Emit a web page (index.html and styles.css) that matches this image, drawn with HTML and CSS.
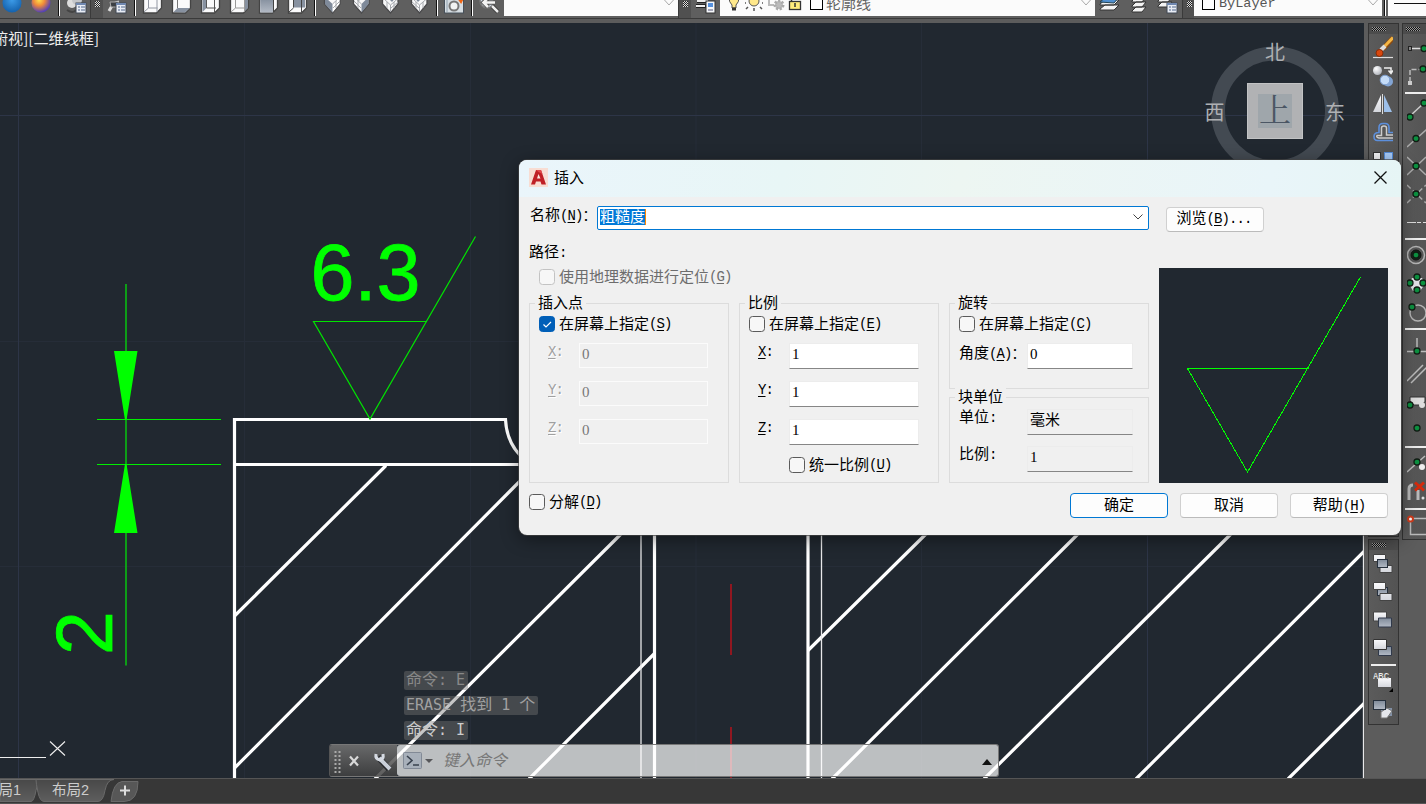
FILE: index.html
```html
<!DOCTYPE html>
<html lang="zh-CN">
<head>
<meta charset="utf-8">
<title>插入</title>
<link rel="stylesheet" href="styles.css">
</head>
<body>
<svg class="defs" width="0" height="0">
  <defs>
    <radialGradient id="blue" cx=".5" cy=".35" r=".6"><stop offset="0" stop-color="#3c9be8"/><stop offset="1" stop-color="#1765b0"/></radialGradient>
    <radialGradient id="fire" cx=".4" cy=".35" r=".65"><stop offset="0" stop-color="#ffe04a"/><stop offset=".45" stop-color="#f08a3a"/><stop offset="1" stop-color="#5140b8"/></radialGradient>
    <radialGradient id="ball" cx=".35" cy=".3" r=".8"><stop offset="0" stop-color="#fff"/><stop offset="1" stop-color="#aaaeb6"/></radialGradient>
    <linearGradient id="pale" x1="0" y1="0" x2="0" y2="1"><stop offset="0" stop-color="#fbfbfd"/><stop offset="1" stop-color="#d4d6dc"/></linearGradient>
    <linearGradient id="steel" x1="0" y1="0" x2="0" y2="1"><stop offset="0" stop-color="#7f8a99"/><stop offset="1" stop-color="#b3bac5"/></linearGradient>
    <linearGradient id="tab" x1="0" y1="0" x2="0" y2="1"><stop offset="0" stop-color="#484848"/><stop offset="1" stop-color="#5e5e5e"/></linearGradient>
    <g id="list"><rect x="14" y="3" width="10" height="10" fill="#e9edf5" stroke="#404855"/><path d="M14 4h10" stroke="#7088b0" stroke-width="2"/><path d="M16 7h2M19 7h4M16 10h2M19 10h4" stroke="#52698c"/></g>
    <g id="dot"><circle r="3" fill="#0c9140" stroke="#111d14" stroke-width="1.300"/></g>
    <g id="box"><path d="M5.500-3h18V8l-5 5h-13z" fill="#fafafb" stroke="#444" stroke-width="1.300"/></g>
    <g id="iso"><path d="M6.500-3v7l8 9L22 4v-7z" fill="#f8f8f9" stroke="#4a4a4c" stroke-width="1.300"/></g>
  </defs>
</svg>

<header class="toolbar">
  <svg class="t first"><circle cx="14" cy="3" r="9.500" fill="url(#blue)"/></svg>
  <svg class="t"><circle cx="14" cy="3" r="9.500" fill="url(#fire)"/></svg>
  <i class="sep"></i>
  <svg class="t t28"><circle cx="10" cy="3" r="5" fill="#ddd"/><circle cx="15" cy="0" r="5" fill="#c4c6c9"/><path d="M5 10q6 4 9 0" stroke="#444" fill="none" stroke-width="2"/><use href="#list"/></svg>
  <i class="grip"></i>
  <svg class="t"><path d="M6 11 10 4l6-2" stroke="#ddd" stroke-width="3" fill="none"/><path d="M7 2h8v5H8z" fill="#3c3f43" stroke="#aaa"/><use href="#list" x="-1"/></svg>
  <i class="sep"></i>
  <svg class="t"><use href="#box"/><path d="M10.500-3V8h9M19 12V-3M10.500 8 6 12" fill="none" stroke="#9297a2"/></svg>
  <svg class="t"><use href="#box"/><path d="M6.500 12l4-4H23l-5 4.500z" fill="#8791a0"/><path d="M10.500-3V8" fill="none" stroke="#777"/></svg>
  <svg class="t"><use href="#box"/><path d="M6.500-3h4V8l-4 4z" fill="#8791a0"/><path d="M10.500-3V8H20M18.500 12V-3" fill="none" stroke="#555"/></svg>
  <svg class="t"><use href="#box"/><path d="M19.500-3H23V8l-3.500 3.500z" fill="#8791a0"/><path d="M10.500-3V8h9M10.500 8 6 12M19.500-3v15" fill="none" stroke="#999"/></svg>
  <svg class="t"><use href="#box"/><path d="M6.200-3h13v15.500h-13z" fill="url(#steel)"/><path d="M19.500-3v15" stroke="#444"/></svg>
  <svg class="t"><use href="#box"/><path d="M10.500-3H22V7.500H10.500z" fill="#8791a0"/><path d="M10.500-3V7.500M18.500 12V-3M10.500 8 6 12" fill="none" stroke="#444"/></svg>
  <i class="sep"></i>
  <svg class="t"><use href="#iso"/><path d="M14.500 4v8.500L21.500 4v-6z" fill="#fff"/><path d="M7-3 14.500 4v8.500L7 4z" fill="#7f8a9a"/><path d="M14.500 4 22-3M10 0l4-4M18 1v7M15 8l7-7" stroke="#a6a9ae" fill="none"/></svg>
  <svg class="t"><use href="#iso"/><path d="M21.500-3 14.500 4v8.500L21.500 4z" fill="#7f8a9a"/><path d="M14.500 4 7-3M11 1v7M7 1l7 7M11 1l7-5" stroke="#a6a9ae" fill="none"/></svg>
  <svg class="t"><use href="#iso"/><path d="M11-3h9l-4 5z" fill="#7f8a9a"/><path d="M14.500 5v7M14.500 5 7-2M14.500 5l7-6M11 2v6M18 2v6M15 8l7-6" stroke="#a6a9ae" fill="none"/></svg>
  <svg class="t"><use href="#iso"/><path d="M9-3h9l-5 5z" fill="#7f8a9a"/><path d="M14.500 5v7M14.500 5 7-2M14.500 5l7-6M11 2v6M18 2v6M7 2l7 6" stroke="#a6a9ae" fill="none"/></svg>
  <i class="sep"></i>
  <svg class="t"><rect x="4.500" y="-2" width="19" height="15" fill="#d6dde2" stroke="#47505a"/><path d="M7-2v14" stroke="#8fa0ae"/><circle cx="14" cy="6" r="4.500" fill="#f1f3f3" stroke="#777" stroke-width="2"/><path d="M15-1h10M18-2l3 4 2-4" stroke="#f06412" stroke-width="2"/></svg>
  <i class="sep"></i>
  <svg class="t"><circle cx="12" cy="1" r="7" fill="#cdd6e2" stroke="#777" stroke-width="1.500"/><path d="M20 2.500H9M13-2 8.500 2.500 13 7" stroke="#555" stroke-width="4.500" fill="none"/><path d="M20 2.500H9M13-2 8.500 2.500 13 7" stroke="#f4f4f4" stroke-width="2.500" fill="none"/><path d="M17 6l6 6" stroke="#333" stroke-width="4"/><path d="M17 6l6 6" stroke="#eee" stroke-width="2.500"/></svg>
  <div class="combo c1"><svg class="chev" viewBox="0 0 12 8"><path d="M1.500 1 6 6l4.500-5"/></svg></div>
  <i class="grip"></i>
  <svg class="t"><path d="M6 1h11M5 6h10" stroke="#222" stroke-width="4"/><path d="M6 1h11M5 6h9" stroke="#eee" stroke-width="2"/><rect x="15" y="1" width="9" height="12" fill="#f5f7fa" stroke="#333"/><rect x="17" y="3" width="5" height="4" fill="#5590dd"/><path d="M17 10h5" stroke="#557"/></svg>
  <div class="combo c2">
    <svg class="layer" width="106" height="16"><path d="M9-2h10q0 4-3 7v3h-4V5Q9 2 9-2z" fill="#ffe98c" stroke="#555"/><path d="M12 9h4" stroke="#333" stroke-width="3"/><circle cx="34" cy="1" r="5" fill="#ffe88a" stroke="#555"/><path d="M26 3h-1M28 7l-2 2M34 8v3M40 7l2 2M42 3h1" stroke="#555" stroke-width="1.500"/><path d="M49-1v6h5M50 5h-2" stroke="#bbb" stroke-width="2" fill="none"/><circle cx="59" cy="5" r="4" fill="#bbb" stroke="#aaa" stroke-width="3" stroke-dasharray="2 1.500"/><rect x="69.500" y="1.500" width="11" height="8" fill="#ffec7c" stroke="#333" stroke-width="1.300"/><path d="M75 3v4M71.500 1v-4" stroke="#333" stroke-width="1.500"/><rect x="90.500" y="-4.500" width="12" height="14" fill="#fff" stroke="#000"/></svg>
    <span class="lname">轮廓线</span>
    <svg class="chev" viewBox="0 0 12 8"><path d="M1.500 1 6 6l4.500-5"/></svg>
  </div>
  <svg class="t"><path d="M5 9l5-4h14l-5 5H5zM5 4l5-4h14l-5 5H5z" fill="#f3f3f3" stroke="#333"/><path d="M5 2l6-5h13l-5 6z" fill="#4f8fd0" stroke="#245"/></svg>
  <svg class="t"><path d="M8 11l4-4h10l-4 5H8zM8 6l4-4h10l-4 5H8zM8 1l4-4h10l-4 5H8z" fill="#f3f3f3" stroke="#333"/></svg>
  <svg class="t"><path d="M5 6l4-4h10l-4 5H5zM5 1l4-4h10l-4 5H5z" fill="#f3f3f3" stroke="#333"/><use href="#list"/></svg>
  <i class="grip g2"></i>
  <div class="combo c3"><i class="swatch"></i><span class="byl">ByLayer</span><svg class="chev" viewBox="0 0 12 8"><path d="M1.500 1 6 6l4.500-5"/></svg></div>
  <i class="sep"></i>
  <div class="combo c4"><i class="ltype"></i></div>
</header>

<main class="work">
  <section class="canvas">
    <svg class="drawing" viewBox="0 23 1364 755" width="1364" height="755">
      <g stroke="#262d38"><path d="M244.500 23v755M470.500 23v755M696 23v755M921.500 23v755M0 341.500h1364M0 566.500h1364"/></g>
      <g stroke="#2d3547"><path d="M18.500 23v755M1147.500 23v755M0 115.500h1364"/></g>
      <g class="solid"><path d="M234.500 778V419.500H505.500q1 22 15 36"/><path d="M234 464.500h300M654.500 530v248M808 530v248"/>
        <path d="M235 615.500 386 465.500M235 767.500 536 465M375 779 624 531M529 779 654 654M808 650.500 929 531M832 779 1081 531M984 779 1234 531M1136 779 1364 551.500M1288 779l76-75.500"/></g>
      <path d="M641 530v248M821.500 530v248M1363.500 530v248" stroke="#e8e8ea" stroke-width="1.300"/>
      <path d="M731 584v71M731 727v51" stroke="#b5121b" stroke-width="1.500"/>
      <g stroke="#00e400" fill="none" stroke-width="1.200"><path d="M97 419.500h124M97 464.500h124" stroke="#0e0"/><path d="M126 284v381.500" stroke="#0abb12" stroke-width="1.600"/><path d="M427 321.500H313.500L370 419 475.500 236.500"/></g>
      <path d="M114 351h23.500l-11 69h-1.500zM114 533h23.500l-11-69h-1.500z" fill="#0f0"/>
      <text x="310.500" y="299.500" class="dim">6.3</text>
      <text transform="translate(111.500 655) rotate(-90)" class="dim">2</text>
      <path d="M0 757.500h46M50 741.500l15 14M65 741.500l-15 14" stroke="#eee" fill="none" stroke-width="1.100"/>
      <text x="-7" y="44" class="view" textLength="106" lengthAdjust="spacingAndGlyphs">俯视][二维线框]</text>
      <circle cx="1275" cy="110.500" r="57" fill="none" stroke="#434a52" stroke-width="14"/>
      <rect x="1247.500" y="83.500" width="55" height="55" fill="#b1b2b4" stroke="#c2c3c4"/>
      <rect x="1258" y="94" width="34" height="34" fill="#9fa6ab"/>
      <text x="1275" y="122" class="up">上</text>
      <text x="1275" y="59.500" class="dir">北</text><text x="1214.500" y="119.500" class="dir">西</text><text x="1335" y="119.500" class="dir">东</text>
    </svg>
    <div class="command">
      <div class="hist h1">命令<b>: E</b></div>
      <div class="hist h2"><b>ERASE </b>找到<b> 1 </b>个</div>
      <div class="hist h3">命令<b>: I</b></div>
      <div class="cmdline">
        <svg class="cmdleft" width="67" height="32"><path d="M5.500 6v22M9.500 6v22" stroke="#aaa" stroke-width="2" stroke-dasharray="2 2"/><path d="M20 11.500l8 9M28 11.500l-8 9" stroke="#d8d8d8" stroke-width="2.200"/><path d="M48 12l11 12" stroke="#26282c" stroke-width="6"/><path d="M49 13l11 11" stroke="#cad0da" stroke-width="4"/><path d="M46 9q-1 5 4 6 4-1 3-6" fill="none" stroke="#d5dae2" stroke-width="3"/></svg>
        <div class="entry">
          <svg width="46" height="32"><rect x="6.500" y="7.500" width="18" height="16" rx="1" fill="#a8b0ba" stroke="#828a96"/><path d="M10 11l5 4.500-5 4.500M16 20h6" fill="none" stroke="#39424e" stroke-width="1.600"/><path d="M28 14h8l-4 4z" fill="#56575a"/></svg>
          <span>键入命令</span>
          <svg class="upmark" width="10" height="6"><path d="M0 6h10L5 0z" fill="#111"/></svg>
        </div>
      </div>
    </div>
  </section>

  <aside class="dock">
    <div class="col">
      <div class="panel modify">
        <i class="hgrip"></i>
        <svg><path d="M0 23.500h20" stroke="#ddd" stroke-width="1.200"/><path d="M10 15 20 4" stroke="#8a4b14" stroke-width="5"/><path d="M10 14 20 3.500" stroke="#f5b644" stroke-width="3"/><path d="M8 16l4-4" stroke="#ddd" stroke-width="4"/><circle cx="6.500" cy="19" r="3.500" fill="#d8480f" stroke="#8c2c05"/></svg>
        <svg><circle cx="4.500" cy="8.500" r="4.500" fill="url(#ball)"/><path d="M11 6h7v5M15.500 8.500l2.500 3 2-3" stroke="#eee" fill="none" stroke-width="1.500"/><circle cx="15" cy="19.500" r="5" fill="#83a5d4"/><circle cx="12" cy="18" r="4.800" fill="#c4dcf8" stroke="#7c9ed0"/></svg>
        <svg><path d="M8 5v17H0z" fill="url(#pale)"/><path d="M11 5v17h8z" fill="#9dc0ea"/><path d="M9.500 4v20" stroke="#ddd"/></svg>
        <svg><path d="M20 22.500H4.500q-3.500 0-3.500-4t5-4V9.500q0-4 4-4h2q4 0 4 4v5H20" fill="none" stroke="#5c8fdc" stroke-width="1.600"/><path d="M20 20H6q-3-.5-2-2.500h4.500V10q0-2 2.500-2t2.500 2v7H20" fill="none" stroke="#ccc" stroke-width="1.500"/></svg>
        <svg><rect x=".5" y="6.500" width="7" height="7" fill="#f3f3f5" stroke="#333"/><rect x="11.500" y="6.500" width="8" height="8" fill="#a7caf7" stroke="#548bd7"/></svg>
      </div>
      <div class="panel order">
        <i class="hgrip"></i>
        <svg><path d="M.5 4.500h12v7H.5zM7 15.500h12v7H7z" fill="url(#pale)" stroke="#444"/><rect x="4.500" y="9.500" width="10" height="8" fill="url(#steel)" stroke="#26303d"/></svg>
        <svg><rect x="4.500" y="9.500" width="10" height="8" fill="url(#steel)" stroke="#26303d"/><path d="M.5 4.500h12v7H.5zM7 15.500h12v7H7z" fill="url(#pale)" stroke="#444"/></svg>
        <svg><path d="M.5 6h13v9H.5z" fill="url(#pale)" stroke="#444"/><path d="M5.500 12h13v9h-13z" fill="url(#steel)" stroke="#30394a"/></svg>
        <svg><path d="M5.500 12.500h13v9h-13z" fill="url(#steel)" stroke="#30394a"/><path d="M.5 5.500h13v10H.5z" fill="url(#pale)" stroke="#333"/></svg>
        <i class="hsep"></i>
        <svg><rect x="4.500" y="9.500" width="14" height="10" fill="url(#pale)" stroke="#555"/><text x="0" y="11" class="abc" textLength="16" lengthAdjust="spacingAndGlyphs">ABC</text><path d="M20 20v4h-4z" fill="#000"/></svg>
        <svg><path d="M8 12h11v8H8z" fill="#8391a6"/><path d="M8 16l6-4 5 3-5 7H8z" fill="#e5e7ec" stroke="#777"/><rect x=".5" y="4.500" width="12" height="9" fill="url(#steel)" stroke="#26303d"/></svg>
      </div>
    </div>
    <div class="panel snap">
      <i class="hgrip"></i>
      <svg><path d="M4 14.500h11" stroke="#ddd" stroke-width="1.500"/><rect x="1.500" y="12.500" width="3" height="4" fill="#888" stroke="#222"/><use href="#dot" x="17" y="14.500"/></svg>
      <svg><path d="M3 20V7.500h11" fill="none" stroke="#bbb" stroke-width="1.500" stroke-dasharray="5 2"/><rect x="1" y="19" width="4" height="4" fill="#ccc"/><use href="#dot" x="16" y="7"/></svg>
      <i class="hsep"></i>
      <svg><path d="M3 20 17 7" stroke="#ccc" stroke-width="1.500"/><use href="#dot" x="3" y="21"/><use href="#dot" x="17" y="7"/></svg>
      <svg><path d="M0 23 20 5" stroke="#aaa" stroke-width="1.500"/><use href="#dot" x="9" y="14.500"/></svg>
      <svg><path d="M0 5l19 18M0 23 19 5" stroke="#aaa" stroke-width="1.500"/><use href="#dot" x="9" y="14"/></svg>
      <svg><path d="M0 5l19 18M0 23 19 5" stroke="#aaa" stroke-width="1.500" stroke-dasharray="5 3"/><use href="#dot" x="9" y="14"/></svg>
      <svg><path d="M0 14.500h9M10 14.500h4M16 14.500h4" stroke="#ddd" stroke-width="1.200"/></svg>
      <i class="hsep"></i>
      <svg><circle cx="9" cy="13" r="8.500" fill="none" stroke="#b4b4b4" stroke-width="1.500"/><circle cx="9" cy="13" r="5" fill="#18271d" stroke="#111"/><use href="#dot" x="9" y="13"/></svg>
      <svg><path d="M5 8h10l3 6-5 7H6l-4-7z" fill="#e2e2e8"/><use href="#dot" x="10" y="7"/><use href="#dot" x="3" y="13"/><use href="#dot" x="16" y="13"/><use href="#dot" x="10" y="20"/></svg>
      <svg><circle cx="11" cy="15" r="8" fill="none" stroke="#b4b4b4" stroke-width="1.500"/><use href="#dot" x="5" y="9"/></svg>
      <i class="hsep"></i>
      <svg><path d="M10 6v13M0 19.500h20" stroke="#bbb" stroke-width="1.500"/><use href="#dot" x="10" y="19"/></svg>
      <svg><path d="M0 21 16 5M4 23 20 7" stroke="#bbb" stroke-width="1.500"/></svg>
      <svg><path d="M3 9h15v5l-5 3H7l-4-4z" fill="#ddd" stroke="#333"/><use href="#dot" x="3" y="17"/><circle cx="15" cy="17" r="3" fill="#ddd"/></svg>
      <svg><use href="#dot" x="10" y="12"/></svg>
      <i class="hsep"></i>
      <svg><path d="M0 22 18 6" stroke="#bbb" stroke-width="1.500"/><use href="#dot" x="10" y="12"/><circle cx="15" cy="17" r="3" fill="#eee"/></svg>
      <svg><path d="M2 22V11q0-4 4-4M11 22V12" fill="none" stroke="#bbb" stroke-width="3"/><path d="M8 4.500l9 8M17 4.500l-9 8" stroke="#d62a0c" stroke-width="3"/><circle cx="16" cy="20" r="1.500" fill="#ddd"/></svg>
      <i class="hsep"></i>
      <svg><rect x="3.500" y="6.500" width="20" height="16" fill="none" stroke="#bbb" stroke-width="1.500"/><circle cx="3.500" cy="7" r="2.500" fill="#fff" stroke="#d23c1c" stroke-width="2"/></svg>
    </div>
  </aside>
</main>

<footer class="tabs">
  <svg class="tabshape" width="145" height="25"><path d="M0 .5h45q-7 0-9 11t-5 11H0z" fill="url(#tab)" stroke="#6a6a6a"/><path d="M36 .5h78q-7 0-9 11t-7 11H44q-4 0-6-9T36 .5z" fill="url(#tab)" stroke="#6a6a6a"/><path d="M122 2.500h16q0 20-14 20h-13q2-19 11-20z" fill="#575757" stroke="#6a6a6a"/><path d="M120 11.500h10M125 6.500v10" stroke="#ddd" stroke-width="2"/></svg>
  <span class="tab1">布局1</span><span class="tab2">布局2</span>
</footer>

<div class="dialog">
  <div class="title">
    <svg width="19" height="19"><rect width="19" height="19" fill="#f8ddd3"/><path d="M2 16.500 7 2h5l5 14.500h-4.500l-1-3H7l-1 3z" fill="#bf2026"/><path d="M8 10.500 9.500 6l2 4.500z" fill="#fbe8e2"/><path d="M7 2h5l1.500 4-4-2z" fill="#e0484a"/></svg>
    <span>插入</span>
    <svg class="close" width="13" height="13"><path d="M.5.5l12 12M12.500.5l-12 12" stroke="#111" stroke-width="1.300"/></svg>
  </div>
  <div class="body">
    <div class="left">
      <div class="namerow"><label>名称<b>(<u>N</u>)：</b></label>
        <div class="namebox"><mark>粗糙度</mark><svg class="chev" viewBox="0 0 12 8"><path d="M1.500 1.500 6 6l4.500-4.500"/></svg></div>
      </div>
      <div class="path">路径<b>:</b></div>
      <div class="check geo off"><i class="box"></i>使用地理数据进行定位<b>(<u>G</u>)</b></div>
      <div class="groups">
        <section class="group">
          <h2>插入点</h2>
          <div class="check"><i class="box on"><svg width="14" height="14"><path d="M3.500 7.500 6 10l5-5" stroke="#fff" fill="none" stroke-width="1.200"/></svg></i>在屏幕上指定<b>(<u>S</u>)</b></div>
          <div class="fields off">
            <label><b><u>X</u>:</b></label><span class="input">0</span>
            <label><b><u>Y</u>:</b></label><span class="input">0</span>
            <label><b><u>Z</u>:</b></label><span class="input">0</span>
          </div>
        </section>
        <section class="group">
          <h2>比例</h2>
          <div class="check"><i class="box"></i>在屏幕上指定<b>(<u>E</u>)</b></div>
          <div class="fields">
            <label><b><u>X</u>:</b></label><span class="input">1</span>
            <label><b><u>Y</u>:</b></label><span class="input">1</span>
            <label><b><u>Z</u>:</b></label><span class="input">1</span>
          </div>
          <div class="check uniform"><i class="box"></i>统一比例<b>(<u>U</u>)</b></div>
        </section>
        <div class="stack">
          <section class="group rot">
            <h2>旋转</h2>
            <div class="check"><i class="box"></i>在屏幕上指定<b>(<u>C</u>)</b></div>
            <div class="fields wide"><label>角度<b>(<u>A</u>)：</b></label><span class="input">0</span></div>
          </section>
          <section class="group unit">
            <h2>块单位</h2>
            <div class="fields wide ro">
              <label>单位<b>:</b></label><span class="input cjk">毫米</span>
              <label>比例<b>:</b></label><span class="input">1</span>
            </div>
          </section>
        </div>
      </div>
    </div>
    <div class="right">
      <button class="browse">浏览<b>(<u>B</u>)...</b></button>
      <svg class="preview" width="229" height="215"><path d="M150 100.500H28.500L88.500 204 201.500 9" fill="none" stroke="#0f0" shape-rendering="crispEdges"/></svg>
    </div>
  </div>
  <div class="foot">
    <div class="check"><i class="box"></i>分解<b>(<u>D</u>)</b></div>
    <button class="primary">确定</button><button>取消</button><button>帮助<b>(<u>H</u>)</b></button>
  </div>
</div>
</body>
</html>
```
FILE: styles.css
```css
* { box-sizing: border-box; }
body {
  margin: 0; width: 1426px; height: 804px; overflow: hidden; position: relative;
  display: flex; flex-direction: column; background: #5c5c5c;
  font-family: "Liberation Sans", "Noto Sans CJK SC", sans-serif; font-size: 15px;
}
svg { display: block; flex: none; }
.defs { position: absolute; }
b { font: 14px "Liberation Mono", "Noto Sans CJK SC", monospace; letter-spacing: -.9px; }
u { text-underline-offset: 2px; }

/* top toolbar */
.toolbar { display: flex; height: 23px; flex: none; background: linear-gradient(#5f5f5f 0 18px, #3a3a3a 18px 19px, #5c5c5c 19px); }
.toolbar > * { height: 18px; flex: none; }
.toolbar > svg { overflow: hidden; }
.t { width: 29px; }
.t.first { margin-left: -2px; }
.t28 { width: 28px; }
.sep { width: 6px; height: 16px !important; background: linear-gradient(90deg, transparent 2px, #111 2px 3px, #fff 3px 4px, transparent 4px); }
.grip { width: 13px; padding: 1px 0 0 5px; background: linear-gradient(90deg, #3a3a3a 1px, #505050 1px); }
.g2 { width: 12px; }
.grip::after { content: ""; display: block; width: 5px; height: 6px; background: repeating-conic-gradient(#ddd 0 25%, #222 0 50%) 0 0 / 2px 2px; }
.toolbar .combo { height: 16px; background: #fbfbfb; display: flex; align-items: flex-start; }
.chev { width: 12px; height: 8px; fill: none; stroke: #aaa; margin-left: auto; }
.toolbar .chev { margin-right: 3px; margin-top: -1px; }
.c1 { width: 174px; }
.c2 { width: 375px; }
.c3 { width: 188px; }
.c4 { width: 38px; padding-left: 6px; }
.lname { margin-top: -7px; line-height: 22px; color: #666; }
.swatch { width: 13px; height: 14px; margin: -4px 4px 0 8px; border: 1px solid #000; background: #fff; }
.byl { font: 13.5px/20px "Liberation Mono", monospace; margin-top: -6px; color: #555; }
.ltype { width: 32px; height: 1px; margin-top: 3px; background: #111; }

/* drawing area */
.work { display: flex; flex: 1; min-height: 0; }
.canvas { width: 1364px; position: relative; background: #212830; }
.solid { stroke: #fff; stroke-width: 3.2; fill: none; }
.dim { font: 79px "Liberation Sans", sans-serif; fill: #0f0; stroke: #0f0; stroke-width: .8px; }
.view { font: 15px "Noto Sans CJK SC", sans-serif; fill: #eee; }
.up { font: 32px "Noto Serif CJK SC", "Noto Sans CJK SC", sans-serif; fill: #4b5664; text-anchor: middle; }
.dir { font: 20px "Noto Sans CJK SC", sans-serif; fill: #aeb0b3; text-anchor: middle; }
.command { position: absolute; left: 329px; bottom: 1px; width: 670px; }
.hist { width: fit-content; height: 19px; line-height: 18px; margin: 0 0 6px 75px; padding: 0 3px 0 2px; border-radius: 2px; background: rgba(120, 120, 120, .42); color: #aaa; font-size: 16px; white-space: pre; display: flex; }
.hist b { font: 15px/18px "DejaVu Sans Mono", monospace; letter-spacing: 0; }
.h1 { color: #888; }
.h2 { color: #a0a0a0; }
.h3 { color: #ccc; margin-bottom: 4px; }
.cmdline { display: flex; height: 33px; border: 1px solid #777; border-left-color: #555; border-radius: 3px; overflow: hidden; }
.cmdleft { background: linear-gradient(rgba(112, 112, 112, .9), rgba(64, 64, 64, .85)); }
.entry { flex: 1; display: flex; background: rgba(255, 255, 255, .7); border-radius: 3px 0 0 3px; line-height: 31px; font-style: italic; font-size: 16px; color: #777; }
.upmark { margin: 14px 6px 0 auto; }

/* tool palettes */
.dock { flex: 1; display: flex; gap: 3px; padding-left: 4px; overflow: hidden; background: #5c5c5c; }
.col { display: flex; flex-direction: column; gap: 2px; }
.panel { width: 31px; flex: none; border: 1px solid #333; background: linear-gradient(90deg, #5b5b5b, #535353); }
.panel svg { width: 20px; height: 28px; margin-left: 4px; overflow: hidden; }
.modify { height: 514px; }
.order { height: 186px; }
.snap { height: 517px; }
.hgrip { display: flex; height: 10px; padding: 3px 0 0 3px; background: #4c4c4c; }
.hgrip::after { content: ""; width: 14px; height: 4px; background: repeating-conic-gradient(#111 0 25%, #999 0 50%) 0 0 / 2px 2px; }
.hsep { display: block; height: 2px; margin: 2px; background: #eee; }
.abc { font: bold 8.5px "Liberation Sans", sans-serif; fill: #f2f2f2; stroke: #666; stroke-width: .2px; }

/* layout tabs */
.tabs { position: relative; height: 26px; flex: none; border-top: 1px solid #555; border-bottom: 1px solid #555; background: #373737; display: flex; align-items: center; color: #ccc; font-size: 14.5px; }
.tabshape { position: absolute; left: 0; top: 0; }
.tab1, .tab2 { position: relative; line-height: 22px; padding-bottom: 2px; }
.tab1 { margin-left: -16px; width: 68px; }

/* insert dialog */
.dialog { position: absolute; left: 519px; top: 160px; width: 882px; height: 375px; border-radius: 8px; background: #f0f0f0; overflow: hidden; box-shadow: 0 0 0 1px #444a, 0 4px 18px rgba(0, 0, 0, .45); color: #000; }
.title { height: 37px; display: flex; align-items: center; padding: 0 14px 2px 10px; background: linear-gradient(100deg, #eaf5fb, #e8f6f6 30%, #edf6f2 50%, #e9f5f9 85%, #e6f5f5); }
.title span { margin-left: 6px; line-height: 20px; }
.close { margin-left: auto; }
.body { display: flex; height: 286px; padding-left: 10px; }
.left { width: 620px; }
.namerow { display: flex; padding-top: 9px; height: 44px; }
.namerow label { width: 68px; padding-left: 1px; line-height: 16px; margin-top: -2px; }
.namerow label b, .wide label b { white-space: nowrap; }
.namebox { display: flex; align-items: center; width: 552px; height: 24px; padding: 0 4px 2px 2px; border: 1px solid #0078d4; border-radius: 2px; background: #fff; }
.namebox mark { background: #0078d7; color: #fff; line-height: 16px; border-right: 1px solid #f80; }
.namebox .chev { stroke: #444; }
.path { height: 28px; line-height: 21px; }
.check { display: flex; align-items: center; height: 16px; white-space: nowrap; line-height: 16px; }
.box { width: 16px; height: 16px; margin-right: 4px; border: 1px solid #5a5a5a; border-radius: 3.5px; background: #f7f7f7; flex: none; }
.box.on { background: #005fb8; border-color: #005fb8; }
.geo { margin-left: 10px; color: #6d6d6d; }
.off .box, .geo .box { border-color: #c3c3c3; }
.groups { display: flex; gap: 10px; margin-top: 18px; }
.group { width: 200px; height: 180px; border: 1px solid #dcdcdc; padding: 0 9px; }
.group h2 { margin: -10px 0 0 -4px; padding: 0 3px; width: fit-content; height: 18px; background: #f0f0f0; font-size: 15px; font-weight: 400; line-height: 18px; }
.group .check { margin-top: 4px; }
.stack { display: flex; flex-direction: column; gap: 8px; }
.rot, .unit { height: 86px; }
.fields { display: grid; grid-template-columns: 40px 130px; row-gap: 12px; margin-top: 11px; }
.fields label { padding-left: 9px; line-height: 16px; height: 26px; white-space: nowrap; }
.input { height: 26px; padding-left: 2px; border: 1px solid #ececec; border-bottom: 1px solid #868686; background: #fff; font: 15px/20px "Liberation Serif", serif; }
.off label { color: #a0a0a0; text-shadow: 1px 1px #fff; }
.off .input { border: 1px solid #fbfbfb; background: #f0f0f0; color: #777; line-height: 21px; height: 25px; margin-right: 1px; }
.wide { grid-template-columns: 68px 106px; }
.wide label { padding-left: 0; line-height: 16px; }
.rot .wide label { line-height: 13px; margin-top: -1px; }
.ro { margin-top: 3px; row-gap: 11px; }
.ro .input { background: #f0f0f0; }
.input.cjk { font: 15px/18px "Noto Sans CJK SC", sans-serif; }
.group .uniform { margin: 12px 0 0 40px; }
.right { width: 229px; margin-left: 10px; }
button { width: 98px; height: 25px; padding: 0 0 2px; border: 1px solid #d0d0d0; border-bottom-color: #bbb; border-radius: 4px; background: #fdfdfd; color: #000; font: 15px "Liberation Sans", "Noto Sans CJK SC", sans-serif; line-height: 20px; white-space: nowrap; }
.primary { border-color: #0078d4; }
.browse { display: block; margin: 10px 0 36px 7px; padding: 0 2px 3px 0; }
.preview { background: #212830; }
.foot { display: flex; gap: 12px; padding: 10px 13px 0 10px; }
.foot .check { margin: 1px auto 0 0; }
```
